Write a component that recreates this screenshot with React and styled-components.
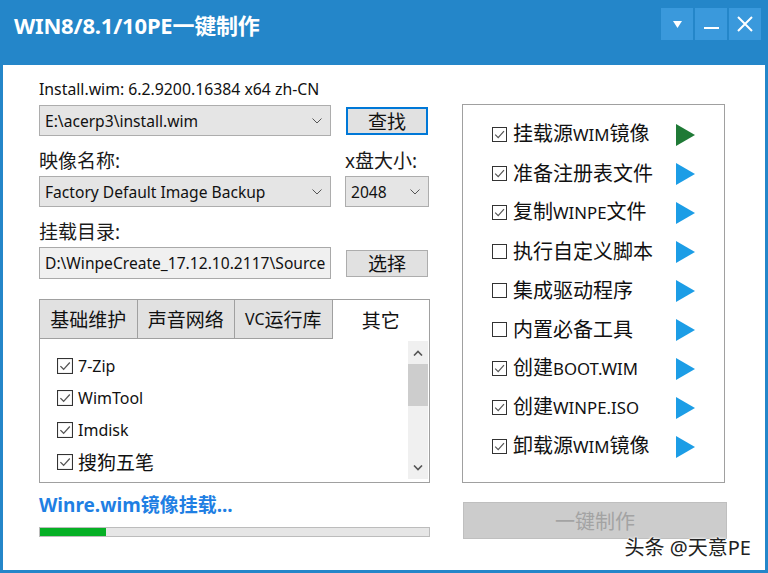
import React from "react";
import styled, { createGlobalStyle } from "styled-components";

const Global = createGlobalStyle`
  html, body { margin: 0; padding: 0; background: #fff; }
  body { font-family: "Noto Sans", "Noto Sans CJK SC", sans-serif; }
  * { box-sizing: border-box; }
`;

const Window = styled.div`
  position: relative;
  width: 768px;
  height: 573px;
  background: #2486c9;
  display: flex;
  flex-direction: column;
  padding: 0 3px 3px 3px;
`;

const TitleBar = styled.div`
  height: 65px;
  flex: none;
  display: flex;
  justify-content: space-between;
  align-items: flex-start;
  padding: 0 4px 0 11px;
`;

const Title = styled.div`
  margin-top: 11px;
  line-height: 28px;
  font-size: 22px;
  font-weight: 700;
  color: #fff;
  letter-spacing: -0.2px;
`;

const WinButtons = styled.div`
  margin-top: 8px;
  display: flex;
  gap: 2px;
`;

const WinButton = styled.div`
  width: 32px;
  height: 32px;
  background: #3a99dc;
  display: flex;
  align-items: center;
  justify-content: center;
`;

const Body = styled.div`
  flex: 1;
  background: #fff;
  display: flex;
  gap: 32px;
  padding: 15px 0 0 36px;
`;

const LeftCol = styled.div`
  width: 391px;
  display: flex;
  flex-direction: column;
`;

const InfoLine = styled.div`
  font-size: 15.8px;
  line-height: 18px;
  color: #111;
  white-space: nowrap;
`;

const FieldRow = styled.div`
  display: grid;
  grid-template-columns: 292px 84px;
  column-gap: 14px;
  align-items: center;
  margin-top: ${(p) => p.$mt || 0}px;
`;

const Label = styled.div`
  font-size: 19px;
  line-height: 24px;
  color: #1a1a1a;
  white-space: nowrap;
`;

const Combo = styled.div`
  height: 31px;
  background: #e5e5e5;
  border: 1px solid #adadad;
  display: flex;
  align-items: center;
  padding: 0 8px 0 5px;
  font-size: 15.6px;
  color: #111;
  justify-content: space-between;
  white-space: nowrap;
`;

const TextBox = styled.div`
  height: 32px;
  background: #f0f0f0;
  border: 1px solid #a9a9a9;
  display: flex;
  align-items: center;
  padding: 0 5px;
  font-size: 15.6px;
  color: #111;
  white-space: nowrap;
  overflow: hidden;
`;

const Button = styled.div`
  justify-self: center;
  width: 82px;
  height: ${(p) => p.$h || 28}px;
  background: #e1e1e1;
  border: ${(p) => (p.$focus ? "2px solid #0078d7" : "1px solid #adadad")};
  display: flex;
  align-items: center;
  justify-content: center;
  font-size: 19px;
  color: #111;
`;

const TabControl = styled.div`
  margin-top: 20px;
  height: 184px;
  border: 1px solid #a0a0a0;
  display: flex;
  flex-direction: column;
`;

const TabStrip = styled.div`
  height: 39px;
  display: flex;
  flex: none;
`;

const Tab = styled.div`
  flex: 1;
  background: ${(p) => (p.$active ? "#fff" : "#e1e1e1")};
  border-right: ${(p) => (p.$active ? "none" : "1px solid #a0a0a0")};
  border-bottom: ${(p) => (p.$active ? "none" : "1px solid #a0a0a0")};
  display: flex;
  align-items: center;
  justify-content: center;
  font-size: 19px;
  color: #111;
  white-space: nowrap;
`;

const TabPanel = styled.div`
  flex: 1;
  display: flex;
  padding: 2px 1px 3px 0;
`;

const List = styled.div`
  flex: 1;
  padding: 9px 0 0 17px;
`;

const ListItem = styled.div`
  height: 32px;
  display: flex;
  align-items: center;
  gap: 5px;
  font-size: ${(p) => p.$fs || 16}px;
  color: #111;
`;

const ScrollBar = styled.div`
  width: 20px;
  background: #f0f0f0;
  display: flex;
  flex-direction: column;
  align-items: center;
  justify-content: space-between;
`;

const ScrollArrow = styled.div`
  height: 23px;
  width: 20px;
  display: flex;
  align-items: center;
  justify-content: center;
`;

const ScrollThumb = styled.div`
  width: 20px;
  height: 42px;
  background: #cdcdcd;
`;

const ScrollTrack = styled.div`
  flex: 1;
  width: 20px;
`;

const Status = styled.div`
  margin-top: 11px;
  font-size: 19px;
  line-height: 22px;
  font-weight: 700;
  color: #1f7fe3;
  white-space: nowrap;
`;

const Progress = styled.div`
  margin-top: 11px;
  height: 10px;
  background: #e6e6e6;
  border: 1px solid #bcbcbc;
  display: flex;
`;

const ProgressFill = styled.div`
  height: 100%;
  background: #06b025;
`;

const RightCol = styled.div`
  width: 265px;
  margin-top: 24px;
  display: flex;
  flex-direction: column;
`;

const StepBox = styled.div`
  width: 263px;
  height: 379px;
  border: 1px solid #a0a0a0;
  padding: 10px 0 0 29px;
`;

const StepRow = styled.div`
  height: 39px;
  display: grid;
  grid-template-columns: 15px 157px 19px;
  column-gap: 6px;
  align-items: center;
`;

const StepLabel = styled.div`
  font-size: 20px;
  line-height: 24px;
  color: #111;
  white-space: nowrap;
`;

const Lat = styled.span`
  font-size: 0.84em;
`;

const BigButton = styled.div`
  margin: 19px 0 0 1px;
  width: 264px;
  height: 37px;
  background: #cccccc;
  border: 1px solid #bfbfbf;
  display: flex;
  align-items: center;
  justify-content: center;
  font-size: 20px;
  color: #a3a3a3;
`;

const Watermark = styled.div`
  position: absolute;
  right: 17px;
  bottom: 13px;
  font-size: 20px;
  line-height: 24px;
  color: #222;
  text-shadow: 0 0 2px #fff, 0 0 2px #fff, 0 0 3px #fff;
`;

const CheckBox = ({ checked, size = 15 }) => (
  <svg width={size} height={size} viewBox="0 0 15 15">
    <rect x="0.5" y="0.5" width="14" height="14" fill="#fff" stroke="#333" />
    {checked && (
      <path d="M3.2 7.6 L6.2 10.6 L12 4.2" fill="none" stroke="#555" strokeWidth="1.2" />
    )}
  </svg>
);

const Chevron = () => (
  <svg width="10" height="6" viewBox="0 0 10 6">
    <path d="M0.5 0.5 L5 5 L9.5 0.5" fill="none" stroke="#555" strokeWidth="1" />
  </svg>
);

const Arrow = ({ color }) => (
  <svg width="19" height="22" viewBox="0 0 19 22">
    <polygon points="0,0 19,11 0,22" fill={color} />
  </svg>
);

const steps = [
  { checked: true, label: ["挂载源", "WIM", "镜像"], color: "#1f7a36" },
  { checked: true, label: ["准备注册表文件"], color: "#1c9de6" },
  { checked: true, label: ["复制", "WINPE", "文件"], color: "#1c9de6" },
  { checked: false, label: ["执行自定义脚本"], color: "#1c9de6" },
  { checked: false, label: ["集成驱动程序"], color: "#1c9de6" },
  { checked: false, label: ["内置必备工具"], color: "#1c9de6" },
  { checked: true, label: ["创建", "BOOT.WIM"], color: "#1c9de6" },
  { checked: true, label: ["创建", "WINPE.ISO"], color: "#1c9de6" },
  { checked: true, label: ["卸载源", "WIM", "镜像"], color: "#1c9de6" },
];

const renderLabel = (parts) =>
  parts.map((p, i) => (i % 2 === 1 ? <Lat key={i}>{p}</Lat> : <span key={i}>{p}</span>));

const tools = [
  { name: "7-Zip" },
  { name: "WimTool" },
  { name: "Imdisk" },
  { name: "搜狗五笔", fs: 19 },
];

const tabs = [
  { label: ["基础维护"] },
  { label: ["声音网络"] },
  { label: ["", "VC", "运行库"] },
  { label: ["其它"], active: true },
];

export default function App() {
  return (
    <>
      <Global />
      <Window>
        <TitleBar>
          <Title>WIN8/8.1/10PE一键制作</Title>
          <WinButtons>
            <WinButton>
              <svg width="9" height="7" viewBox="0 0 9 7">
                <polygon points="0,0 9,0 4.5,7" fill="#fff" />
              </svg>
            </WinButton>
            <WinButton>
              <svg width="15" height="15" viewBox="0 0 15 15">
                <rect x="0" y="10" width="15" height="2" fill="#fff" />
              </svg>
            </WinButton>
            <WinButton>
              <svg width="16" height="16" viewBox="0 0 16 16">
                <path d="M1 1 L15 15 M15 1 L1 15" stroke="#fff" strokeWidth="2" />
              </svg>
            </WinButton>
          </WinButtons>
        </TitleBar>
        <Body>
          <LeftCol>
            <InfoLine>Install.wim: 6.2.9200.16384 x64 zh-CN</InfoLine>
            <FieldRow $mt={7}>
              <Combo>
                <span>E:\acerp3\install.wim</span>
                <Chevron />
              </Combo>
              <Button $focus>查找</Button>
            </FieldRow>
            <FieldRow $mt={13}>
              <Label>映像名称:</Label>
              <Label>x盘大小:</Label>
            </FieldRow>
            <FieldRow $mt={3}>
              <Combo>
                <span>Factory Default Image Backup</span>
                <Chevron />
              </Combo>
              <Combo>
                <span>2048</span>
                <Chevron />
              </Combo>
            </FieldRow>
            <FieldRow $mt={13}>
              <Label>挂载目录:</Label>
            </FieldRow>
            <FieldRow $mt={3}>
              <TextBox>D:\WinpeCreate_17.12.10.2117\Source</TextBox>
              <Button $h={27}>选择</Button>
            </FieldRow>
            <TabControl>
              <TabStrip>
                {tabs.map((t, i) => (
                  <Tab key={i} $active={t.active}>
                    {renderLabel(t.label)}
                  </Tab>
                ))}
              </TabStrip>
              <TabPanel>
                <List>
                  {tools.map((t) => (
                    <ListItem key={t.name} $fs={t.fs}>
                      <CheckBox checked size={16} />
                      <span>{t.name}</span>
                    </ListItem>
                  ))}
                </List>
                <ScrollBar>
                  <ScrollArrow>
                    <svg width="10" height="6" viewBox="0 0 10 6">
                      <path d="M1 5.5 L5 1.5 L9 5.5" fill="none" stroke="#555" strokeWidth="1.6" />
                    </svg>
                  </ScrollArrow>
                  <ScrollThumb />
                  <ScrollTrack />
                  <ScrollArrow>
                    <svg width="10" height="6" viewBox="0 0 10 6">
                      <path d="M1 0.5 L5 4.5 L9 0.5" fill="none" stroke="#555" strokeWidth="1.6" />
                    </svg>
                  </ScrollArrow>
                </ScrollBar>
              </TabPanel>
            </TabControl>
            <Status>Winre.wim镜像挂载...</Status>
            <Progress>
              <ProgressFill style={{ width: "17%" }} />
            </Progress>
          </LeftCol>
          <RightCol>
            <StepBox>
              {steps.map((s, i) => (
                <StepRow key={i}>
                  <CheckBox checked={s.checked} />
                  <StepLabel>{renderLabel(s.label)}</StepLabel>
                  <Arrow color={s.color} />
                </StepRow>
              ))}
            </StepBox>
            <BigButton>一键制作</BigButton>
          </RightCol>
        </Body>
        <Watermark>头条 @天意PE</Watermark>
      </Window>
    </>
  );
}
